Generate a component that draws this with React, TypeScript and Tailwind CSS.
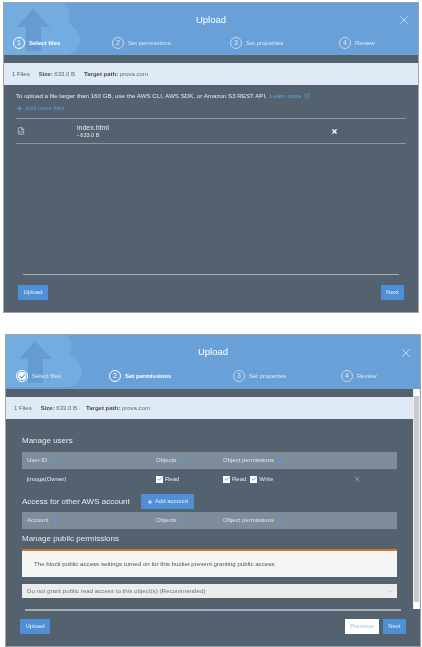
import React from "react";
import { X, Plus, Check, ChevronDown, FileCode, ExternalLink, Info } from "lucide-react";

const font = "font-['Liberation_Sans',Arial,sans-serif]";

function Cloud() {
  return (
    <svg viewBox="0 0 76 52" className="absolute top-0 left-0 w-[76px] h-[52px]">
      <path d="M0 0H60C66 4 67 13 64 20C72 24 76 31 76 37C76 45 69 52 60 52H0Z" fill="#73addf" />
      <path d="M13 24L29 6L46 24H37V48H22V24Z" fill="#659bd2" />
    </svg>
  );
}

function Circle({ label, active, done }: { label: string; active?: boolean; done?: boolean }) {
  if (done) {
    return (
      <span className="w-[12px] h-[12px] rounded-full border border-white flex items-center justify-center shrink-0">
        <span className="w-[8px] h-[8px] rounded-full bg-white flex items-center justify-center">
          <Check size={7} strokeWidth={3.5} className="text-[#4f8fd6]" />
        </span>
      </span>
    );
  }
  return (
    <span className={`w-[12px] h-[12px] rounded-full border flex items-center justify-center text-[7px] shrink-0 ${active ? "border-white text-white" : "border-[#c4daf0] text-[#dce9f6]"}`}>
      {label}
    </span>
  );
}

function Step({ n, text, w, active, done }: { n: string; text: string; w: string; active?: boolean; done?: boolean }) {
  return (
    <div className={`flex items-center gap-[4px] ${w}`}>
      <Circle label={n} active={active} done={done} />
      <span className={`text-[6px] ${active ? "font-bold text-white" : "text-[#dce9f6]"}`}>{text}</span>
    </div>
  );
}

function SummaryBar() {
  return (
    <div className="h-[22px] bg-[#dfeaf6] flex items-center pl-[8px] gap-[9px] text-[6px] text-[#5b6670]">
      <span>1 Files</span>
      <span><b className="text-[#444c54]">Size:</b> 633.0 B</span>
      <span><b className="text-[#444c54]">Target path:</b> prova.com</span>
    </div>
  );
}

function Btn({ children, className = "" }: { children: React.ReactNode; className?: string }) {
  return (
    <span className={`h-[15px] bg-[#4f8fd6] text-[#e8f1fa] text-[6px] flex items-center justify-center ${className}`}>
      {children}
    </span>
  );
}

function Dot() {
  return <Info size={6} strokeWidth={3} className="text-[#5b9bd8] ml-[3px]" />;
}

function TableHead({ first }: { first: string }) {
  return (
    <div className="h-[17px] bg-[#7f8c99] flex items-center pl-[5px] text-[6px] text-[#dfe4e9]">
      <span className="w-[129px] flex items-center">{first}<Dot /></span>
      <span className="w-[67px] flex items-center">Objects<Dot /></span>
      <span className="flex items-center">Object permissions<Dot /></span>
    </div>
  );
}

function Check2({ label }: { label: string }) {
  return (
    <span className="flex items-center gap-[2px] text-[6px] text-[#e4e8ec]">
      <span className="w-[7px] h-[7px] bg-white flex items-center justify-center">
        <Check size={6} strokeWidth={3.5} className="text-[#4f8fd6]" />
      </span>
      {label}
    </span>
  );
}

export default function App() {
  return (
    <div className={`w-[422px] h-[647px] bg-white overflow-hidden pt-[2px] blur-[0.35px] ${font}`}>
      {/* First dialog */}
      <section className="ml-[3px] w-[416px] h-[311px] bg-[#54626f] border border-[#9aa3aa] flex flex-col">
        <header className="relative h-[52px] bg-[#6aa0d8] shrink-0">
          <Cloud />
          <div className="relative h-[34px] flex items-center justify-center text-white text-[9.5px]">Upload</div>
          <X size={14} strokeWidth={1} className="absolute right-[7px] top-[10px] text-white" />
          <div className="relative flex items-center pl-[9px]">
            <Step n="1" text="Select files" w="w-[99px]" active />
            <Step n="2" text="Set permissions" w="w-[118px]" />
            <Step n="3" text="Set properties" w="w-[109px]" />
            <Step n="4" text="Review" />
          </div>
        </header>
        <div className="h-[8px] shrink-0" />
        <SummaryBar />
        <div className="px-[12px] pt-[7px] text-[#e6eaee]">
          <p className="text-[6.2px] flex items-center gap-[2px] h-[8px] whitespace-nowrap">
            To upload a file larger than 160 GB, use the AWS CLI, AWS SDK, or Amazon S3 REST API.
            <span className="text-[#5fa6e0] ml-[1px]">Learn more</span>
            <ExternalLink size={6} className="text-[#5fa6e0]" />
          </p>
          <div className="flex items-center gap-[2px] text-[6.2px] text-[#5b9bd8] h-[8px] mt-[4px]">
            <Plus size={7} strokeWidth={3} />
            Add more files
          </div>
          <div className="mt-[6px] h-[26px] border-y border-[#8b97a1] flex items-center">
            <FileCode size={8} className="text-[#d5dade] ml-[1px] shrink-0" />
            <div className="ml-[52px] w-[254px]">
              <div className="text-[7px] leading-[8px]">index.html</div>
              <div className="text-[5.5px] leading-[7px]">- 633.0 B</div>
            </div>
            <X size={7} strokeWidth={4} className="text-white" />
          </div>
        </div>
        <div className="mt-auto mx-[19px] h-[1px] bg-[#a4adb4]" />
        <div className="flex justify-between px-[14px] pt-[10px] pb-[12px]">
          <Btn className="w-[30px]">Upload</Btn>
          <Btn className="w-[23px]">Next</Btn>
        </div>
      </section>

      <div className="h-[21px]" />

      {/* Second dialog */}
      <section className="ml-[5px] w-[416px] h-[313px] bg-[#54626f] border border-[#9aa3aa] flex flex-col">
        <header className="relative h-[54px] bg-[#6aa0d8] shrink-0">
          <Cloud />
          <div className="relative h-[35px] flex items-center justify-center text-white text-[9.5px]">Upload</div>
          <X size={14} strokeWidth={1} className="absolute right-[7px] top-[11px] text-white" />
          <div className="relative flex items-center pl-[10px]">
            <Step n="" text="Select files" w="w-[93px]" done />
            <Step n="2" text="Set permissions" w="w-[124px]" active />
            <Step n="3" text="Set properties" w="w-[108px]" />
            <Step n="4" text="Review" />
          </div>
        </header>
        <div className="flex h-[220px] shrink-0">
          <div className="flex-1 min-w-0 overflow-hidden">
            <div className="h-[8px]" />
            <SummaryBar />
            <div className="pl-[16px] pr-[16px] text-[#e6eaee]">
              <h3 className="text-[8px] h-[10px] leading-[10px] mt-[17px] mb-[6px]">Manage users</h3>
              <TableHead first="User ID" />
              <div className="h-[20px] flex items-center pl-[5px] text-[6px]">
                <span className="w-[129px] pt-[1px]">jimoga(Owner)</span>
                <span className="w-[67px]"><Check2 label="Read" /></span>
                <span className="flex gap-[4px]"><Check2 label="Read" /><Check2 label="Write" /></span>
                <X size={8} strokeWidth={1.2} className="ml-[80px] text-[#dfe4e9]" />
              </div>
              <div className="flex items-center h-[15px] mt-[5px] gap-[11px]">
                <h3 className="text-[8px] w-[108px] whitespace-nowrap">Access for other AWS account</h3>
                <Btn className="w-[53px] gap-[2px]"><Plus size={6} strokeWidth={4} />Add account</Btn>
              </div>
              <div className="mt-[3px]"><TableHead first="Account" /></div>
              <h3 className="text-[8px] h-[10px] leading-[10px] mt-[5px] mb-[5px]">Manage public permissions</h3>
              <div className="h-[28px] bg-[#f4f5f5] border-t-2 border-[#d9742b] flex items-center pl-[12px] text-[6.15px] text-[#4a545d]">
                The block public access settings turned on for this bucket prevent granting public access.
              </div>
              <div className="mt-[7px] h-[14px] bg-[#ececec] flex items-center justify-between pl-[5px] pr-[3px] text-[6.2px] text-[#6a747c]">
                Do not grant public read access to this object(s) (Recommended)
                <ChevronDown size={7} className="text-[#8fb2d6]" />
              </div>
            </div>
          </div>
          <div className="w-[7px] bg-[#c8cacc] border-x border-[#eeeeee] flex flex-col justify-between shrink-0">
            <span className="h-[7px] bg-white" />
            <span className="h-[7px] bg-white" />
          </div>
        </div>
        <div className="h-[2px] mx-[19px] bg-[#a4adb4]" />
        <div className="flex items-center px-[14px] pt-[8px]">
          <Btn className="w-[30px]">Upload</Btn>
          <span className="h-[15px] w-[34px] ml-auto bg-white text-[#a9bfd8] text-[6px] flex items-center justify-center">Previous</span>
          <Btn className="w-[23px] ml-[4px]">Next</Btn>
        </div>
      </section>
    </div>
  );
}
